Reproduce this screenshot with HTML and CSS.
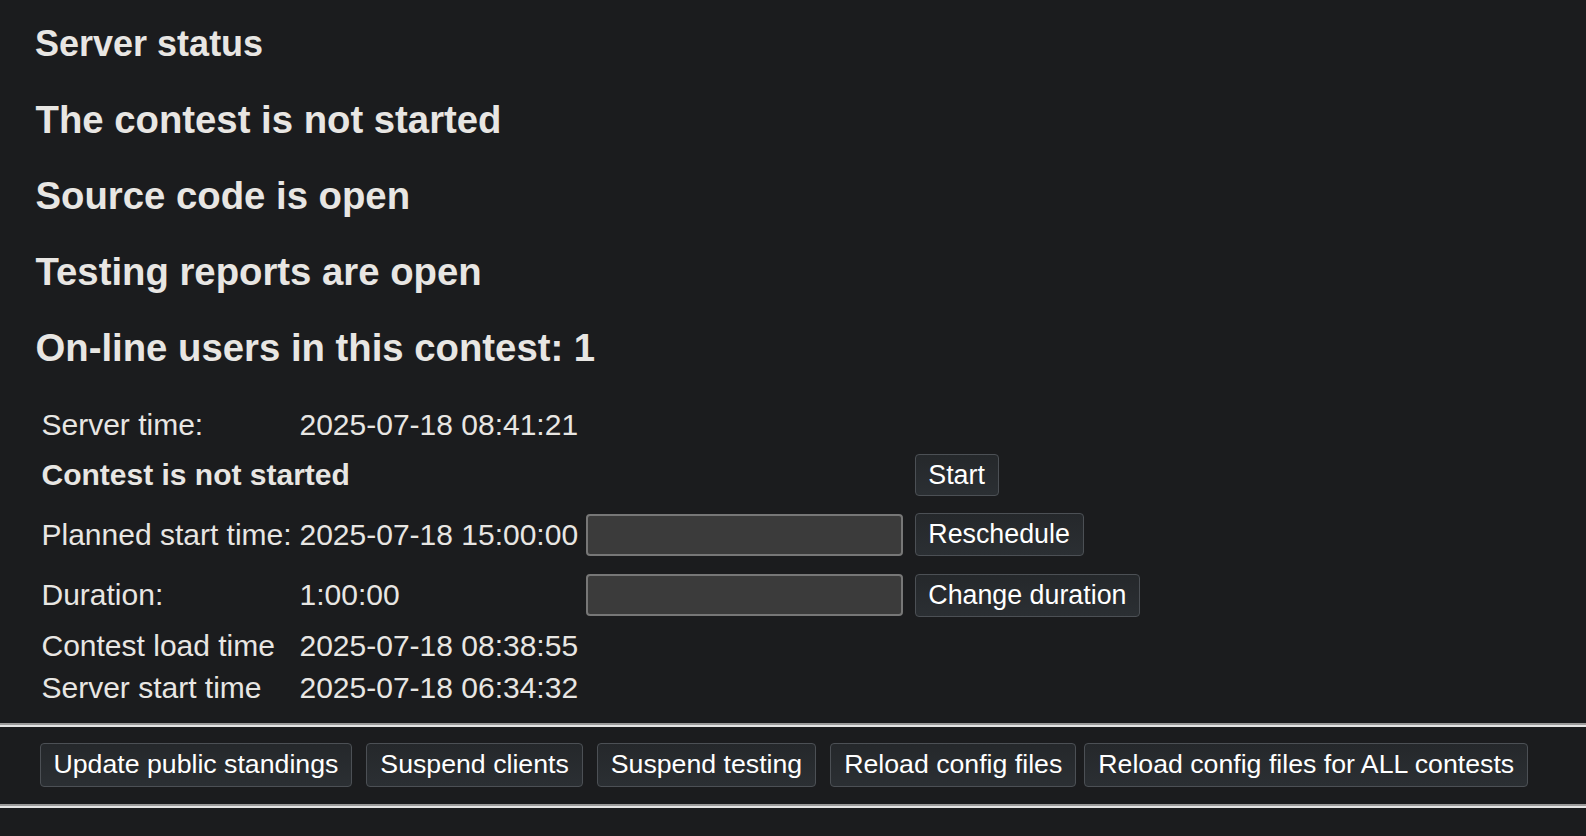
FILE: index.html
```html
<!DOCTYPE html>
<html lang="en">
<head>
<meta charset="utf-8">
<title>Server status</title>
<link rel="stylesheet" href="styles.css">
</head>
<body>
<div class="page">
  <h2 class="title">Server status</h2>
  <h2 class="status">The contest is not started</h2>
  <h2 class="status">Source code is open</h2>
  <h2 class="status">Testing reports are open</h2>
  <h2 class="status">On-line users in this contest: 1</h2>

  <div class="info">
    <div class="cell r1">Server time:</div>
    <div class="cell r1">2025-07-18 08:41:21</div>
    <div class="cell r1"></div>
    <div class="cell r1"></div>

    <div class="cell r2 bold span3">Contest is not started</div>
    <div class="cell r2"><button class="btn">Start</button></div>

    <div class="cell r3">Planned start time:</div>
    <div class="cell r3">2025-07-18 15:00:00</div>
    <div class="cell r3"><input class="field" type="text"></div>
    <div class="cell r3"><button class="btn">Reschedule</button></div>

    <div class="cell r4">Duration:</div>
    <div class="cell r4">1:00:00</div>
    <div class="cell r4"><input class="field" type="text"></div>
    <div class="cell r4"><button class="btn">Change duration</button></div>

    <div class="cell r5">Contest load time</div>
    <div class="cell r5">2025-07-18 08:38:55</div>
    <div class="cell r5"></div>
    <div class="cell r5"></div>

    <div class="cell r6">Server start time</div>
    <div class="cell r6">2025-07-18 06:34:32</div>
    <div class="cell r6"></div>
    <div class="cell r6"></div>
  </div>
</div>

<hr class="rule rule-top">
<div class="actions">
  <button class="btn btn-lg">Update public standings</button>
  <button class="btn btn-lg">Suspend clients</button>
  <button class="btn btn-lg">Suspend testing</button>
  <div class="tight">
    <button class="btn btn-lg">Reload config files</button>
    <button class="btn btn-lg">Reload config files for ALL contests</button>
  </div>
</div>
<hr class="rule">
</body>
</html>
```

FILE: styles.css
```css
html, body {
  margin: 0;
  padding: 0;
  background: #1b1c1e;
}

body {
  color: #e8e6e3;
  font-family: "Liberation Sans", Arial, sans-serif;
  font-size: 30px;
}

.page {
  padding: 22px 0 0 35px;
}

h2 {
  margin: 0 0 32px 0;
  line-height: 44px;
  font-weight: bold;
  color: #e8e6e3;
}

.title {
  font-size: 36px;
}

.status {
  font-size: 38.3px;
  padding-left: 0.5px;
}

.info {
  display: grid;
  grid-template-columns: 258px 286px 329px auto;
  grid-template-rows: 45px 56px 63px 58.5px 42.5px 42.5px;
  align-items: center;
  margin-left: 6.5px;
}

.cell {
  white-space: nowrap;
  line-height: 34px;
}

.bold {
  font-weight: bold;
}

.span3 {
  grid-column: 1 / 4;
}

.cell .field {
  display: block;
  box-sizing: border-box;
  width: 317px;
  height: 42px;
  margin: 0;
  background: #3b3b3b;
  border: 2px solid #777777;
  border-radius: 4px;
  color: #e8e6e3;
  font-family: "Liberation Sans", Arial, sans-serif;
  font-size: 26px;
}

.btn {
  display: inline-block;
  box-sizing: border-box;
  height: 42.5px;
  margin: 0;
  padding: 0 12.8px;
  background: linear-gradient(#25282b, #2b2f33);
  border: 1.5px solid #4c5055;
  border-radius: 4px;
  color: #ffffff;
  font-family: "Liberation Sans", Arial, sans-serif;
  font-size: 26.8px;
  line-height: 1;
  vertical-align: middle;
}

.btn-lg {
  height: 43.5px;
  font-size: 26.7px;
  padding: 0 13px;
}

.rule {
  display: block;
  height: 0;
  margin: 0;
  border: 0;
  border-top: 2px solid #9a9a9a;
  border-bottom: 2px solid #e4e4e4;
}

.rule-top {
  margin-top: 13px;
}

.actions {
  display: flex;
  align-items: center;
  gap: 14px;
  padding: 16.5px 0 17px 39.5px;
}

.tight {
  display: flex;
  gap: 8px;
}
```
